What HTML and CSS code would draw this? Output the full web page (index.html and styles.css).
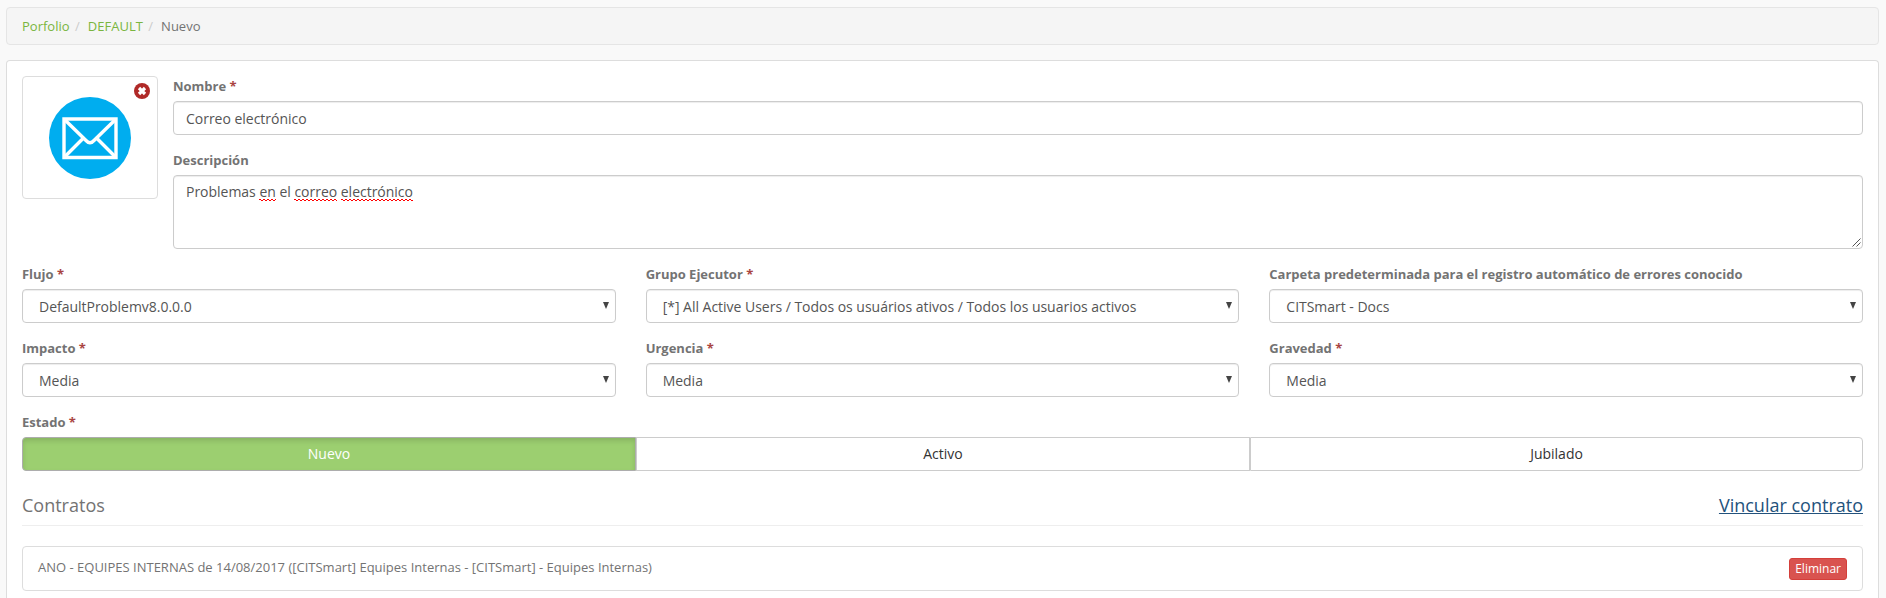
FILE: index.html
```html
<!DOCTYPE html>
<html lang="es">
<head>
<meta charset="utf-8">
<title>Porfolio</title>
<link rel="stylesheet" href="styles.css">
</head>
<body>
<nav class="breadcrumb">
  <a href="#">Porfolio</a><span class="slash">/</span><a href="#">DEFAULT</a><span class="slash">/</span><span>Nuevo</span>
</nav>
<main class="panel">
  <section class="intro">
    <div class="thumb">
      <svg class="mail" viewBox="0 0 82 82">
        <circle cx="41" cy="41" r="41" fill="#00adef"/>
        <g fill="none" stroke="#fff" stroke-width="3.4">
          <path d="M15 22H67V60.500H15Z"/>
          <path d="M15.500 22.500L37 43.500Q41 48 45 43.500L66.500 22.500M15.500 60L34.500 41M66.500 60L47.500 41"/>
        </g>
      </svg>
      <svg class="remove" viewBox="0 0 16 16">
        <circle cx="8" cy="8" r="8" fill="#b02a28"/>
        <path d="M5 5L11 11M11 5L5 11" stroke="#fff" stroke-width="3.200"/>
      </svg>
    </div>
    <div class="fields">
      <div class="field">
        <label class="label">Nombre <i class="req">*</i></label>
        <div class="control">Correo electrónico</div>
      </div>
      <div class="field">
        <label class="label">Descripción</label>
        <div class="control area">Problemas <span class="typo">en</span> el <span class="typo">correo</span> <span class="typo">electrónico</span>
          <svg class="grip" viewBox="0 0 9 9"><path d="M.5 8.500L8.500 .5M4.500 8.500L8.500 4.500" stroke="#555" stroke-width="1"/></svg>
        </div>
      </div>
    </div>
  </section>
  <section class="grid">
    <div class="field"><label class="label">Flujo <i class="req">*</i></label><div class="control select"><span>DefaultProblemv8.0.0.0</span><svg class="arrow" viewBox="0 0 6 7"><path d="M0 0H6L3 7Z"/></svg></div></div>
    <div class="field"><label class="label">Grupo Ejecutor <i class="req">*</i></label><div class="control select"><span>[*] All Active Users / Todos os usuários ativos / Todos los usuarios activos</span><svg class="arrow" viewBox="0 0 6 7"><path d="M0 0H6L3 7Z"/></svg></div></div>
    <div class="field"><label class="label">Carpeta predeterminada para el registro automático de errores conocido</label><div class="control select"><span>CITSmart - Docs</span><svg class="arrow" viewBox="0 0 6 7"><path d="M0 0H6L3 7Z"/></svg></div></div>
    <div class="field"><label class="label">Impacto <i class="req">*</i></label><div class="control select"><span>Media</span><svg class="arrow" viewBox="0 0 6 7"><path d="M0 0H6L3 7Z"/></svg></div></div>
    <div class="field"><label class="label">Urgencia <i class="req">*</i></label><div class="control select"><span>Media</span><svg class="arrow" viewBox="0 0 6 7"><path d="M0 0H6L3 7Z"/></svg></div></div>
    <div class="field"><label class="label">Gravedad <i class="req">*</i></label><div class="control select"><span>Media</span><svg class="arrow" viewBox="0 0 6 7"><path d="M0 0H6L3 7Z"/></svg></div></div>
  </section>
  <div class="field">
    <label class="label">Estado <i class="req">*</i></label>
    <div class="states">
      <div class="state active">Nuevo</div>
      <div class="state">Activo</div>
      <div class="state">Jubilado</div>
    </div>
  </div>
  <header class="heading">
    <span>Contratos</span>
    <a class="link" href="#">Vincular contrato</a>
  </header>
  <div class="contract">
    <span>ANO - EQUIPES INTERNAS de 14/08/2017 ([CITSmart] Equipes Internas - [CITSmart] - Equipes Internas)</span>
    <div class="delete">Eliminar</div>
  </div>
</main>
</body>
</html>
```
FILE: styles.css
```css
* { box-sizing: border-box; }
body {
  display: flex;
  flex-direction: column;
  margin: 0;
  height: 598px;
  padding: 7px 7px 0 6px;
  background: #f9f9f9;
  color: #737373;
  font: 13px/20px "Open Sans", "Noto Sans", sans-serif;
}
.breadcrumb {
  display: flex;
  flex: none;
  height: 38px;
  padding: 8px 15px;
  margin-bottom: 15px;
  background: #f5f5f5;
  border: 1px solid #e5e5e5;
  border-radius: 4px;
}
.breadcrumb a { color: #7ab540; text-decoration: none; }
.slash { color: #ccc; padding: 0 8px 0 5.5px; }
.panel {
  flex: 1;
  min-height: 0;
  padding: 15px 15px 0;
  background: #fff;
  border: 1px solid #ddd;
  border-bottom: 0;
  border-radius: 4px 4px 0 0;
}
.intro { display: flex; gap: 15px; align-items: flex-start; }
.thumb {
  position: relative;
  flex: none;
  width: 136px;
  height: 123px;
  display: flex;
  align-items: center;
  justify-content: center;
  border: 1px solid #ddd;
  border-radius: 4px;
}
.mail { width: 82px; height: 82px; }
.remove { position: absolute; top: 6px; right: 7px; width: 16px; height: 16px; }
.fields { flex: 1; }
.field { display: flex; flex-direction: column; margin-bottom: 15px; }
.label { height: 20px; margin-bottom: 5px; font-weight: 700; white-space: nowrap; letter-spacing: -.01px; }
.req { font-style: normal; color: #a94442; }
.control {
  height: 34px;
  padding: 7px 12px 5px;
  border: 1px solid #ccc;
  border-radius: 4px;
  box-shadow: inset 0 1px 1px rgba(0, 0, 0, .075);
  color: #555;
  font-size: 14px;
  white-space: nowrap;
  letter-spacing: -.02px;
}
.area { position: relative; height: 74px; padding-top: 6px; }
.typo {
  background:
    linear-gradient(#f00, #f00) 0 calc(100% - 1px) / 4px 1px,
    linear-gradient(#f00, #f00) 0 100% / 4px 1px;
  background:
    repeating-linear-gradient(90deg, #f00 0 2px, transparent 2px 4px) 0 calc(100% - 1px) / 100% 1px no-repeat,
    repeating-linear-gradient(90deg, transparent 0 2px, #f00 2px 4px) 0 100% / 100% 1px no-repeat;
}
.grip { position: absolute; right: 1px; bottom: 1px; width: 9px; height: 9px; }
.grid { display: grid; grid-template-columns: repeat(3, 1fr); column-gap: 30px; }
.select {
  display: flex;
  justify-content: space-between;
  padding: 7px 6px 5px 16px;
}
.arrow { width: 6px; height: 7px; margin-top: 5px; fill: #444; }
.states { display: grid; grid-template-columns: 614px 614px 1fr; }
.state {
  height: 34px;
  padding: 6px;
  border: 1px solid #ccc;
  color: #333;
  font-size: 14px;
  text-align: center;
}
.state:first-child { border-radius: 4px 0 0 4px; }
.state:last-child { border-radius: 0 4px 4px 0; }
.active {
  color: #fff;
  background: #9ccf70;
  border-color: #adadad;
  box-shadow: inset 0 3px 5px rgba(0, 0, 0, .125);
}
.heading {
  display: flex;
  justify-content: space-between;
  height: 40px;
  margin-bottom: 20px;
  padding-top: 9px;
  border-bottom: 1px solid #eee;
  font-size: 18px;
}
.link { color: #23527c; }
.contract {
  display: flex;
  justify-content: space-between;
  height: 45px;
  padding: 10px 15px;
  border: 1px solid #ddd;
  border-radius: 4px;
}
.delete {
  height: 22px;
  margin-top: 1px;
  padding: 1px 5px;
  background: #d9534f;
  border: 1px solid #d43f3a;
  border-radius: 3px;
  color: #fff;
  font-size: 12px;
  line-height: 18px;
}
```
